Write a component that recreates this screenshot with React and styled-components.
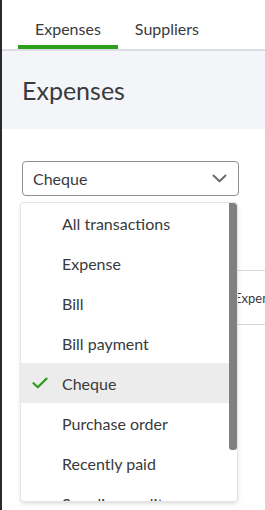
import React from "react";
import styled, { createGlobalStyle } from "styled-components";

const items = [
  "All transactions",
  "Expense",
  "Bill",
  "Bill payment",
  "Cheque",
  "Purchase order",
  "Recently paid",
  "Supplier credit",
  "Credit card payment",
];

const Global = createGlobalStyle`
  html, body {
    margin: 0;
    padding: 0;
    background: #fff;
  }
  body {
    font-family: "Lato", "Open Sans", sans-serif;
    color: #393a3d;
  }
`;

const Check = () => (
  <svg width="16" height="12" viewBox="0 0 16 12" fill="none">
    <path
      d="M1.5 6.2 L5.8 10.3 L14.5 1.6"
      stroke="#2ca01c"
      strokeWidth="2.2"
      strokeLinecap="round"
      strokeLinejoin="round"
    />
  </svg>
);

const Chevron = () => (
  <svg width="15" height="9" viewBox="0 0 15 9" fill="none">
    <path
      d="M1.5 1.5 L7.5 7.3 L13.5 1.5"
      stroke="#6b6c72"
      strokeWidth="2"
      strokeLinecap="round"
      strokeLinejoin="round"
    />
  </svg>
);

const App = () => {
  return (
    <>
      <Global />
      <S.Page>
        <S.Edge />
        <S.Main>
          <S.Tabs>
            <S.Tab active>Expenses</S.Tab>
            <S.Tab>Suppliers</S.Tab>
          </S.Tabs>
          <S.Header>
            <S.Title>Expenses</S.Title>
          </S.Header>
          <S.Body>
            <S.Select>
              <span>Cheque</span>
              <Chevron />
            </S.Select>
            <S.Table>
              <S.HeadCell>Expense</S.HeadCell>
            </S.Table>
            <S.Menu>
              <S.List>
                {items.map((label) => (
                  <S.Item key={label} selected={label === "Cheque"}>
                    <S.Mark>{label === "Cheque" && <Check />}</S.Mark>
                    {label}
                  </S.Item>
                ))}
              </S.List>
              <S.Track>
                <S.Thumb />
              </S.Track>
            </S.Menu>
          </S.Body>
        </S.Main>
      </S.Page>
    </>
  );
};

const S = {
  Page: styled.div`
    display: flex;
    width: 265px;
    height: 510px;
    overflow: hidden;
  `,
  Edge: styled.div`
    flex: 0 0 2px;
    background: #2a2a2a;
  `,
  Main: styled.div`
    flex: 1;
    display: flex;
    flex-direction: column;
    min-width: 0;
  `,
  Tabs: styled.div`
    display: flex;
    height: 49px;
    padding-left: 16px;
    border-bottom: 2px solid #dcdde1;
  `,
  Tab: styled.div`
    display: flex;
    align-items: center;
    padding: 11px 17px 0;
    font-size: 16px;
    color: #393a3d;
    box-sizing: border-box;
    border-bottom: 4px solid ${(p) => (p.active ? "#2ca01c" : "transparent")};
  `,
  Header: styled.div`
    height: 78px;
    background: #f4f5f8;
    display: flex;
    align-items: center;
    padding-left: 20px;
  `,
  Title: styled.h1`
    margin: 0;
    font-size: 25px;
    font-weight: 400;
    color: #393a3d;
  `,
  Body: styled.div`
    position: relative;
    flex: 1;
    padding: 32px 0 0 20px;
  `,
  Select: styled.div`
    width: 217px;
    height: 35px;
    box-sizing: border-box;
    border: 1px solid #8d9096;
    border-radius: 4px;
    display: flex;
    align-items: center;
    justify-content: space-between;
    padding: 0 11px 0 10px;
    font-size: 16px;
    color: #393a3d;
  `,
  Table: styled.div`
    margin-top: 74px;
    height: 53px;
    border-top: 1px solid #d4d7dc;
    border-bottom: 1px solid #d4d7dc;
    display: flex;
    align-items: center;
    padding-left: 212px;
    white-space: nowrap;
  `,
  HeadCell: styled.span`
    font-size: 13px;
    color: #393a3d;
  `,
  Menu: styled.div`
    position: absolute;
    top: 74px;
    left: 19px;
    width: 216px;
    height: 298px;
    background: #fff;
    border-radius: 3px;
    box-shadow: 0 0 0 1px #e4e5e8, 0 2px 5px rgba(0, 0, 0, 0.18);
    display: flex;
    overflow: hidden;
  `,
  List: styled.div`
    flex: 1;
    overflow: hidden;
  `,
  Item: styled.div`
    height: 40px;
    display: flex;
    align-items: center;
    font-size: 16px;
    color: #393a3d;
    white-space: nowrap;
    background: ${(p) => (p.selected ? "#ececec" : "transparent")};
  `,
  Mark: styled.span`
    width: 41px;
    display: flex;
    justify-content: flex-end;
    padding-right: 14px;
    box-sizing: border-box;
  `,
  Track: styled.div`
    flex: 0 0 8px;
  `,
  Thumb: styled.div`
    height: 247px;
    background: #808080;
    border-radius: 0 3px 3px 3px;
  `,
};

export default App;
